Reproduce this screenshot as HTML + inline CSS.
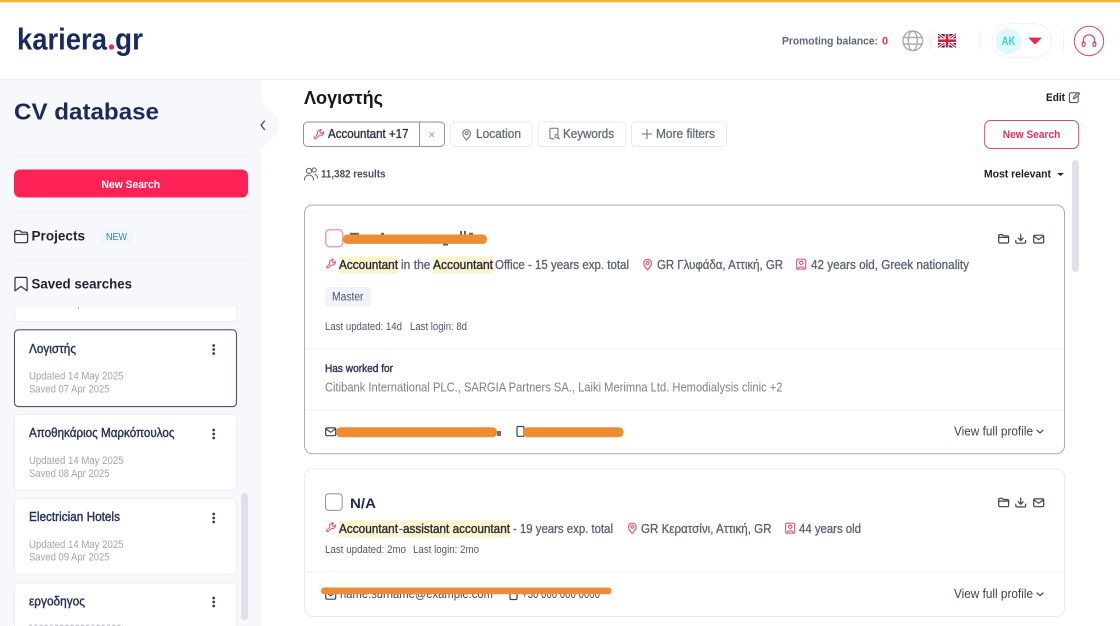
<!DOCTYPE html>
<html lang="en"><head><meta charset="utf-8"><title>CV database</title>
<style>
html,body{margin:0;padding:0;background:#fff;width:1120px;height:626px;overflow:hidden}
svg{display:block}
text{font-family:"Liberation Sans","Noto Sans CJK JP",sans-serif}
.b{font-weight:700}
.m{font-weight:400;fill:currentColor;stroke:currentColor;stroke-width:.3px}
.ic{fill:none;stroke-linecap:round;stroke-linejoin:round}
</style></head><body>
<svg xmlns="http://www.w3.org/2000/svg" width="1120" height="626" viewBox="0 0 1120 626">
<defs>
<g id="wrench" class="ic"><path d="M1 10.5 5 6.6C4.3 4.6 5 2.6 6.6 1.6 7.6 1 8.7 .9 9.7 1.2L7.6 3.4 8.4 5 10 5.6 12 3.5C12.3 5 11.8 6.5 10.6 7.4 9.5 8.2 8.2 8.4 7 8L3 11.8C2.4 12.3 .5 11.6 1 10.5Z"/></g>
<g id="pin" class="ic"><path d="M4.5 11.5C2.5 9.5 .8 7.6 .8 4.9A3.8 3.8 0 0 1 8.4 4.9C8.4 7.6 6.5 9.5 4.5 11.5Z"/><circle cx="4.6" cy="4.8" r="1.5"/></g>
<g id="person" class="ic"><rect x=".7" y=".7" width="9" height="10" rx="1.2"/><circle cx="5.2" cy="4.3" r="1.7"/><path d="M2.5 9.8C2.8 7.9 7.6 7.9 7.9 9.8"/></g>
<g id="folder" class="ic" stroke="#3c4252" stroke-width="1.2"><path d="M.7 2.2C.7 1.3 1.3.8 2 .8H4.2L5.4 2H9.4C10.2 2 10.6 2.6 10.6 3.2V7.8C10.6 8.6 10.1 9.2 9.3 9.2H2C1.2 9.2.7 8.6.7 7.8Z"/><path d="M.7 3.6H10.6"/></g>
<g id="dl" class="ic" stroke="#3c4252" stroke-width="1.2"><path d="M5.7.6V6.4M3.2 4.2 5.7 6.8 8.2 4.2M.8 6.6V8.2C.8 9 1.3 9.4 2 9.4H9.4C10.1 9.4 10.6 9 10.6 8.2V6.6"/></g>
<g id="mail" class="ic" stroke="#3c4252" stroke-width="1.2"><rect x=".7" y="1.4" width="10" height="7.8" rx="1.4"/><path d="M1 2.4 5.7 5.8 10.4 2.4"/></g>
<g id="acts"><use href="#folder" x="998" y="0"/><use href="#dl" x="1015" y="0"/><use href="#mail" x="1033" y="0"/></g>
<g id="dots" fill="#3a3f4f"><circle cx="0" cy="0" r="1.4"/><circle cx="0" cy="4" r="1.4"/><circle cx="0" cy="8" r="1.4"/></g>
<g id="chev" class="ic" stroke="#3c4252" stroke-width="1.2"><path d="M0 0 3 2.6 6 0"/></g>
<clipPath id="list"><rect x="0" y="307" width="240" height="319"/></clipPath>
</defs>

<!-- header -->
<rect width="1120" height="626" fill="#fff"/>
<rect width="1120" height="2.3" fill="#f6b52f"/>
<rect y="79" width="1120" height="1" fill="#eff0f3"/>
<text x="17" y="49.5" class="b" font-size="30.5" fill="#1b2a5c" textLength="90" lengthAdjust="spacingAndGlyphs">kariera</text>
<circle cx="111.5" cy="47" r="2.7" fill="#ee2a5d"/>
<text x="115" y="49.5" class="b" font-size="30.5" fill="#1b2a5c" textLength="28" lengthAdjust="spacingAndGlyphs">gr</text>

<text x="782" y="44.3" class="b" font-size="11" fill="#5f6678" textLength="96" lengthAdjust="spacingAndGlyphs">Promoting balance:</text>
<text x="882" y="44.3" class="b" font-size="11" fill="#e5305f">0</text>
<g class="ic" stroke="#a9abb2" stroke-width="1.4"><circle cx="912.8" cy="40.8" r="9.8"/><ellipse cx="912.8" cy="40.8" rx="4.5" ry="9.8"/><path d="M903.6 37.5H922M903.6 44H922"/></g>
<rect x="930" y="29" width="1" height="24" fill="#f6f6f8"/>
<g>
<rect x="938" y="34" width="18" height="13.5" fill="#27326e"/>
<path d="M938 34 956 47.5M956 34 938 47.5" stroke="#fff" stroke-width="3"/>
<path d="M938 34 956 47.5M956 34 938 47.5" stroke="#d6203a" stroke-width="1.1"/>
<path d="M947 34V47.5M938 40.7H956" stroke="#fff" stroke-width="4.6"/>
<path d="M947 34V47.5M938 40.7H956" stroke="#d6203a" stroke-width="2.6"/>
</g>
<rect x="980" y="30" width="1" height="22" fill="#f6f6f8"/>
<rect x="992" y="23.8" width="59.8" height="33.4" rx="16.7" fill="#fff" stroke="#f0f1f6"/>
<circle cx="1008.3" cy="41" r="13" fill="#def8fb"/>
<text x="1001.8" y="45" class="b" font-size="11.5" fill="#3fcbdc" textLength="13.5" lengthAdjust="spacingAndGlyphs">AK</text>
<path d="M1029 38H1041L1035 44Z" fill="#f5224f" stroke="#f5224f" stroke-width=".8" stroke-linejoin="round"/>
<rect x="1063" y="30" width="1" height="22" fill="#f4f4f7"/>
<circle cx="1089" cy="41" r="14.7" fill="#fff" stroke="#cf4a70" stroke-width="1"/>
<g class="ic" stroke="#d2486f" stroke-width="1.2"><path d="M1083.3 43V40.5A5.7 5.7 0 0 1 1094.7 40.5V43"/><rect x="1082.2" y="42" width="2.8" height="4.4" rx="1.3"/><rect x="1093" y="42" width="2.8" height="4.4" rx="1.3"/></g>

<!-- sidebar -->
<rect y="80" width="261.5" height="546" fill="#f7f8fc"/>
<path d="M261 101C266 106 279 114 279 125C279 136 266 144 261 149Z" fill="#f7f8fc"/>
<path d="M264.5 121 261 125.3 264.5 129.5" class="ic" stroke="#3b4050" stroke-width="1.2"/>
<text x="14" y="119.5" class="b" font-size="23.5" fill="#1b2a5c" textLength="145" lengthAdjust="spacingAndGlyphs">CV database</text>
<rect x="14" y="155" width="234" height="1" fill="#eff0f5"/>
<rect x="14" y="169.5" width="234" height="28" rx="6" fill="#ff2257"/>
<text x="101.5" y="187.8" class="b" font-size="11" fill="#fff" textLength="58.5" lengthAdjust="spacingAndGlyphs">New Search</text>
<rect x="14" y="212" width="234" height="1" fill="#eff0f5"/>
<g class="ic" stroke="#2b303e" stroke-width="1.2"><path d="M14.7 232.5C14.7 231.4 15.4 230.7 16.4 230.7H20L21.5 232.2H25.8C26.9 232.2 27.6 233 27.6 234V241C27.6 242 26.9 242.7 25.8 242.7H16.4C15.4 242.7 14.7 242 14.7 241Z"/><path d="M14.7 234.3H27.6"/></g>
<text x="31.5" y="240.5" class="b" font-size="13.5" fill="#1f2430" textLength="53.5" lengthAdjust="spacingAndGlyphs">Projects</text>
<rect x="100" y="228" width="33" height="17" rx="3" fill="#eff7fd"/>
<text x="106" y="239.8" font-size="10.5" fill="#3f7f9d" textLength="21" lengthAdjust="spacingAndGlyphs">NEW</text>
<rect x="14" y="259.5" width="234" height="1" fill="#eff0f5"/>
<path d="M15 278.9C15 278 15.7 277.4 16.5 277.4H25.7C26.5 277.4 27.1 278 27.1 278.9V290.8L21 286.4 15 290.8Z" class="ic" stroke="#2b303e" stroke-width="1.2"/>
<text x="31.5" y="288.5" class="b" font-size="13.5" fill="#1f2430" textLength="100.5" lengthAdjust="spacingAndGlyphs">Saved searches</text>

<g clip-path="url(#list)">
<rect x="14.5" y="280" width="222" height="41.5" rx="4" fill="#fff" stroke="#eceef3"/>
<text x="29" y="306.6" font-size="11" fill="#a0a4ae" textLength="80.5" lengthAdjust="spacingAndGlyphs">Saved  06 Apr 2025</text>
<rect x="14.5" y="329.8" width="222" height="76.8" rx="4" fill="#fff" stroke="#4d5169" stroke-width="1.1"/>
<text x="29" y="353" class="m" font-size="13" style="color:#27305a;stroke-width:.4px" textLength="47" lengthAdjust="spacingAndGlyphs">Λογιστής</text>
<use href="#dots" x="213.7" y="345.5"/>
<text x="29" y="379.5" font-size="11" fill="#a0a4ae" textLength="94.5" lengthAdjust="spacingAndGlyphs">Updated  14 May 2025</text>
<text x="29" y="392.5" font-size="11" fill="#a0a4ae" textLength="80.5" lengthAdjust="spacingAndGlyphs">Saved  07 Apr 2025</text>

<rect x="14.5" y="414.5" width="222" height="76" rx="4" fill="#fff" stroke="#eceef3"/>
<text x="29" y="437" class="m" font-size="13" style="color:#27305a;stroke-width:.4px" textLength="145.5" lengthAdjust="spacingAndGlyphs">Αποθηκάριος Μαρκόπουλος</text>
<use href="#dots" x="213.7" y="430"/>
<text x="29" y="463.8" font-size="11" fill="#a0a4ae" textLength="94.5" lengthAdjust="spacingAndGlyphs">Updated  14 May 2025</text>
<text x="29" y="476.8" font-size="11" fill="#a0a4ae" textLength="80.5" lengthAdjust="spacingAndGlyphs">Saved  08 Apr 2025</text>

<rect x="14.5" y="498.8" width="222" height="76" rx="4" fill="#fff" stroke="#eceef3"/>
<text x="29" y="521" class="m" font-size="13" style="color:#27305a;stroke-width:.4px" textLength="91" lengthAdjust="spacingAndGlyphs">Electrician Hotels</text>
<use href="#dots" x="213.7" y="514"/>
<text x="29" y="548" font-size="11" fill="#a0a4ae" textLength="94.5" lengthAdjust="spacingAndGlyphs">Updated  14 May 2025</text>
<text x="29" y="560.5" font-size="11" fill="#a0a4ae" textLength="80.5" lengthAdjust="spacingAndGlyphs">Saved  09 Apr 2025</text>

<path d="M14.5 626V587A4 4 0 0 1 18.5 583H232.5A4 4 0 0 1 236.5 587V626" fill="#fff" stroke="#eceef3"/>
<text x="29" y="605.5" class="m" font-size="13" style="color:#27305a;stroke-width:.4px" textLength="56" lengthAdjust="spacingAndGlyphs">εργοδηγος</text>
<use href="#dots" x="213.7" y="598"/>
<path d="M29 625.3H123" stroke="#c4c7cf" stroke-width="1.3" stroke-dasharray="3 2.2"/>
</g>
<rect x="241" y="493" width="7" height="127.5" rx="3.5" fill="#dfe1ea"/>

<!-- main top -->
<text x="304" y="104" class="b" font-size="18.5" fill="#14161d" textLength="79" lengthAdjust="spacingAndGlyphs">Λογιστής</text>
<text x="1046" y="101" class="b" font-size="11" fill="#171a22" textLength="19" lengthAdjust="spacingAndGlyphs">Edit</text>
<g class="ic" stroke="#555a68" stroke-width="1.1"><path d="M1076.5 92.8H1071C1070 92.8 1069.4 93.4 1069.4 94.4V101C1069.4 102 1070 102.6 1071 102.6H1076.6C1077.6 102.6 1078.2 102 1078.2 101V96.5"/><path d="M1073.3 98.8 1074 96.6 1078.2 92.4 1079.6 93.8 1075.4 98Z"/></g>

<rect x="303.5" y="122" width="141" height="24.5" rx="4" fill="#fff" stroke="#8d919c"/>
<rect x="419" y="122" width="1" height="24.5" fill="#8d919c"/>
<use href="#wrench" transform="translate(313.3 128.8) scale(.85)" stroke="#dc5d83" stroke-width="1.3"/>
<text x="328" y="137.8" class="m" font-size="13" style="color:#2b303e;stroke-width:.35px" textLength="80.5" lengthAdjust="spacingAndGlyphs">Accountant +17</text>
<path d="M429.4 132.3 434 136.9M434 132.3 429.4 136.9" stroke="#a2a5ad" stroke-width="1"/>

<rect x="450.5" y="122" width="81.5" height="24.5" rx="4" fill="#fff" stroke="#e7e9ee"/>
<use href="#pin" x="462" y="128.5" stroke="#6a6f7c" stroke-width="1"/>
<text x="476" y="137.8" class="m" font-size="13" style="color:#646a78" textLength="45" lengthAdjust="spacingAndGlyphs">Location</text>

<rect x="537.8" y="122" width="88" height="24.5" rx="4" fill="#fff" stroke="#e7e9ee"/>
<g class="ic" stroke="#6a6f7c" stroke-width="1"><path d="M558 134V129.5C558 128.7 557.4 128.2 556.6 128.2H551.3C550.5 128.2 549.9 128.7 549.9 129.5V137.5C549.9 138.3 550.5 138.8 551.3 138.8H554"/><circle cx="556.6" cy="136.2" r="1.7"/><path d="M557.9 137.5 559.4 139"/></g>
<text x="563" y="137.8" class="m" font-size="13" style="color:#646a78" textLength="51" lengthAdjust="spacingAndGlyphs">Keywords</text>

<rect x="631.5" y="122" width="95" height="24.5" rx="4" fill="#fff" stroke="#e7e9ee"/>
<path d="M647 129V139M642 134H652" stroke="#6a6f7c" stroke-width="1"/>
<text x="656" y="137.8" class="m" font-size="13" style="color:#646a78" textLength="59" lengthAdjust="spacingAndGlyphs">More filters</text>

<rect x="984.7" y="120.5" width="94" height="28" rx="6" fill="#fff" stroke="#cc4d73" stroke-width="1"/>
<text x="1002.8" y="138" class="b" font-size="11" fill="#e5305f" textLength="57.5" lengthAdjust="spacingAndGlyphs">New Search</text>

<g class="ic" stroke="#5a5f6d" stroke-width="1"><circle cx="309" cy="170.8" r="2.6"/><path d="M304.5 180C304.5 176.5 306.5 175 309 175S313.5 176.5 313.5 180"/><circle cx="314.2" cy="170" r="2.1"/><path d="M315 174.4C316.5 174.8 317.4 176 317.5 178"/></g>
<text x="321" y="177.3" class="b" font-size="11" fill="#474c5c" textLength="64.5" lengthAdjust="spacingAndGlyphs">11,382 results</text>
<text x="984" y="177.3" class="b" font-size="11" fill="#1a1d26" textLength="67" lengthAdjust="spacingAndGlyphs">Most relevant</text>
<path d="M1057 173H1064L1060.5 176Z" fill="#22252e"/>
<rect x="1072" y="160" width="7" height="112" rx="3.5" fill="#dfe1ea"/>

<!-- card 1 -->
<rect x="304.5" y="205" width="760" height="248.7" rx="8" fill="#fff" stroke="#a9adb5"/>
<g fill="#5a6070"><rect x="350" y="232.8" width="9" height="2"/><rect x="381" y="232.8" width="3" height="2"/><rect x="443" y="243.5" width="5" height="2"/><rect x="460" y="231" width="2" height="4"/><rect x="464" y="231" width="2" height="4"/><rect x="469" y="232.8" width="4" height="2"/></g>
<rect x="325.7" y="229.7" width="17" height="17" rx="4" fill="#fff" stroke="#eaa3ba" stroke-width="1.6"/>
<use href="#acts" y="233.8"/>
<rect x="343" y="234.5" width="144" height="9.4" rx="4.4" fill="#ee8c34"/>
<use href="#wrench" transform="translate(325.8 258.5) scale(.8)" stroke="#dc5d83" stroke-width="1.3"/>
<rect x="339" y="256.5" width="59" height="17" fill="#fdf3cc"/>
<rect x="433" y="256.5" width="60" height="17" fill="#fdf3cc"/>
<text x="339" y="269" class="m" font-size="13" style="color:#242834;stroke-width:.35px" textLength="59" lengthAdjust="spacingAndGlyphs">Accountant</text>
<text x="401" y="269" class="m" font-size="13" style="color:#5a6070" textLength="29.5" lengthAdjust="spacingAndGlyphs">in the</text>
<text x="433" y="269" class="m" font-size="13" style="color:#242834;stroke-width:.35px" textLength="60" lengthAdjust="spacingAndGlyphs">Accountant</text>
<text x="495" y="269" class="m" font-size="13" style="color:#5a6070" textLength="134" lengthAdjust="spacingAndGlyphs">Office - 15 years exp. total</text>
<use href="#pin" x="643" y="258.3" stroke="#dc5d83" stroke-width="1.2"/>
<text x="657" y="269" class="m" font-size="13" style="color:#5a6070" textLength="126" lengthAdjust="spacingAndGlyphs">GR Γλυφάδα, Αττική, GR</text>
<use href="#person" x="796" y="258.5" stroke="#dc5d83" stroke-width="1.2"/>
<text x="811" y="269" class="m" font-size="13" style="color:#5a6070" textLength="158" lengthAdjust="spacingAndGlyphs">42 years old, Greek nationality</text>
<rect x="325" y="287" width="46" height="19.5" rx="3" fill="#f2f3f8"/>
<text x="332" y="300.3" font-size="11.5" fill="#4b5168" textLength="31.5" lengthAdjust="spacingAndGlyphs">Master</text>
<text x="325" y="330" font-size="11" fill="#50566a" textLength="77" lengthAdjust="spacingAndGlyphs">Last updated: 14d</text>
<text x="410" y="330" font-size="11" fill="#50566a" textLength="57" lengthAdjust="spacingAndGlyphs">Last login: 8d</text>
<rect x="305" y="348.3" width="759" height="1" fill="#eff0f5"/>
<text x="325" y="372" class="m" font-size="11" style="color:#2d3658;stroke-width:.4px" textLength="68" lengthAdjust="spacingAndGlyphs">Has worked for</text>
<text x="325" y="391.3" font-size="13" fill="#7a7f8c" textLength="457.5" lengthAdjust="spacingAndGlyphs">Citibank International PLC., SARGIA Partners SA., Laiki Merimna Ltd. Hemodialysis clinic +2</text>
<rect x="305" y="409.3" width="759" height="1" fill="#eff0f5"/>
<use href="#mail" x="325" y="426.5"/>
<rect x="497" y="431" width="4" height="5" fill="#3c4252" opacity=".75"/>
<rect x="336" y="427.3" width="161" height="10" rx="4.5" fill="#ee8c34"/>
<g class="ic" stroke="#3c4252" stroke-width="1.2"><rect x="517" y="426.5" width="7" height="9.8" rx="1.2"/></g>
<rect x="523" y="427.3" width="100.5" height="10" rx="4.5" fill="#ee8c34"/>
<text x="954" y="435.3" font-size="13" fill="#3c4252" textLength="79" lengthAdjust="spacingAndGlyphs">View full profile</text>
<use href="#chev" x="1037" y="430.3"/>

<!-- card 2 -->
<rect x="304.5" y="468.7" width="760" height="147.8" rx="8" fill="#fff" stroke="#e9ebf0"/>
<rect x="325.5" y="493.7" width="16.7" height="16.7" rx="3.5" fill="#fff" stroke="#8d919c" stroke-width="1"/>
<text x="350" y="508" class="b" font-size="14" fill="#1f2a55" textLength="26" lengthAdjust="spacingAndGlyphs">N/A</text>
<use href="#acts" y="497.5"/>
<use href="#wrench" transform="translate(325.8 522) scale(.8)" stroke="#dc5d83" stroke-width="1.3"/>
<rect x="339" y="520.3" width="59" height="17" fill="#fdf3cc"/>
<rect x="402" y="520.3" width="108" height="17" fill="#fdf3cc"/>
<text x="339" y="533" class="m" font-size="13" style="color:#242834;stroke-width:.35px" textLength="59" lengthAdjust="spacingAndGlyphs">Accountant</text>
<text x="398.5" y="533" class="m" font-size="13" style="color:#5a6070">-</text>
<text x="403" y="533" class="m" font-size="13" style="color:#242834;stroke-width:.35px" textLength="107" lengthAdjust="spacingAndGlyphs">assistant accountant</text>
<text x="513" y="533" class="m" font-size="13" style="color:#5a6070" textLength="100" lengthAdjust="spacingAndGlyphs">- 19 years exp. total</text>
<use href="#pin" x="627.7" y="522" stroke="#dc5d83" stroke-width="1.2"/>
<text x="641" y="533" class="m" font-size="13" style="color:#5a6070" textLength="130.5" lengthAdjust="spacingAndGlyphs">GR Κερατσίνι, Αττική, GR</text>
<use href="#person" x="785" y="522.5" stroke="#dc5d83" stroke-width="1.2"/>
<text x="799" y="533" class="m" font-size="13" style="color:#5a6070" textLength="62" lengthAdjust="spacingAndGlyphs">44 years old</text>
<text x="325" y="553" font-size="11" fill="#50566a" textLength="81" lengthAdjust="spacingAndGlyphs">Last updated: 2mo</text>
<text x="413" y="553" font-size="11" fill="#50566a" textLength="66" lengthAdjust="spacingAndGlyphs">Last login: 2mo</text>
<rect x="305" y="571.3" width="759" height="1" fill="#eff0f5"/>
<use href="#mail" x="325" y="590"/>
<text x="340" y="598" font-size="13" fill="#3c4252" textLength="153" lengthAdjust="spacingAndGlyphs">name.surname@example.com</text>
<rect x="510" y="590" width="7" height="9.5" rx="1.2" fill="none" stroke="#3c4252" stroke-width="1.2"/>
<text x="522" y="598" font-size="13" fill="#3c4252" textLength="78" lengthAdjust="spacingAndGlyphs">+30 000 000 0000</text>
<rect x="321" y="587.5" width="290.5" height="6.8" rx="3.2" fill="#ee8c34"/>
<text x="954" y="598" font-size="13" fill="#3c4252" textLength="79" lengthAdjust="spacingAndGlyphs">View full profile</text>
<use href="#chev" x="1037" y="593"/>
</svg>
</body></html>
